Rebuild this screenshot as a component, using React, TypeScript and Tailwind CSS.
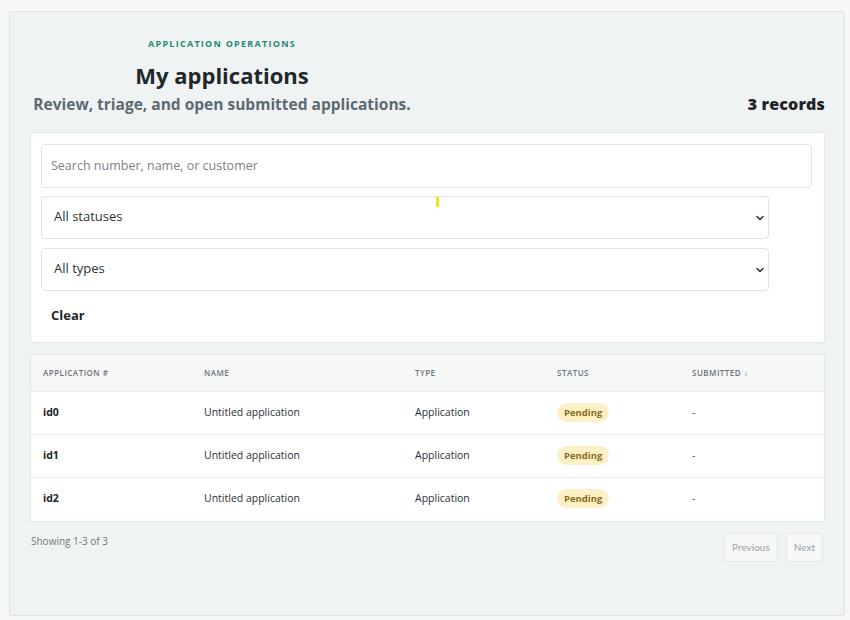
import { ChevronDown } from "lucide-react";

type Row = { id: string; name: string; type: string; status: string; submitted: string };

const rows: Row[] = [
  { id: "id0", name: "Untitled application", type: "Application", status: "Pending", submitted: "-" },
  { id: "id1", name: "Untitled application", type: "Application", status: "Pending", submitted: "-" },
  { id: "id2", name: "Untitled application", type: "Application", status: "Pending", submitted: "-" },
];

function FilterSelect({ label }: { label: string }) {
  return (
    <div className="relative w-[728px]">
      <select className="h-[43px] w-full appearance-none rounded-[4px] border border-[#dfe3e5] bg-white px-3 text-[13px] text-[#2d3338] outline-none">
        <option>{label}</option>
      </select>
      <ChevronDown className="pointer-events-none absolute right-[3px] top-[16px] h-3 w-3 text-[#333]" strokeWidth={3} />
    </div>
  );
}

export default function App() {
  return (
    <div className="min-h-[620px] bg-[#f7f8f8] pt-[11px] pr-[5px] pb-[4px] pl-[9px] font-['Open_Sans','Noto_Sans',sans-serif]">
      <div className="relative h-[605px] rounded-[2px] border border-[#dde2e2] bg-[#f0f3f3] pt-[25px] pr-[19px] pl-5">
        <div className="flex items-end justify-between">
          <div className="flex w-[384px] flex-col items-center">
            <p className="text-[9px] font-bold uppercase tracking-[0.14em] text-[#1d8a6e]">Application operations</p>
            <h1 className="mt-[10px] text-[22px] font-bold leading-[28px] text-[#22272b]">My applications</h1>
            <p className="mt-[4px] text-[15.5px] font-bold leading-[22px] text-[#5c6a71]">Review, triage, and open submitted applications.</p>
          </div>
          <p className="text-[16px] font-extrabold leading-[22px] tracking-[0.01em] text-[#1f2326]">3 records</p>
        </div>

        <section className="mt-[17px] rounded-[2px] border border-[#e4e8e8] bg-white pt-[11px] pr-[12px] pb-[16px] pl-[10px]">
          <input
            placeholder="Search number, name, or customer"
            className="h-[44px] w-full rounded-[4px] border border-[#dfe3e5] bg-white px-[9px] text-[12.5px] text-[#2d3338] outline-none placeholder:text-[#7b8287]"
          />
          <div className="mt-[8px] flex flex-col gap-[9px]">
            <FilterSelect label="All statuses" />
            <FilterSelect label="All types" />
          </div>
          <button type="button" className="mt-[15px] px-[10px] text-[13px] font-bold text-[#23282c]">
            Clear
          </button>
        </section>

        <section className="mt-[11px] overflow-hidden rounded-[2px] border border-[#e1e6e6] bg-white">
          <table className="w-full text-left text-[10.5px] text-[#2b3035]">
            <thead>
              <tr className="h-[37px] bg-[#f6f8f8] text-[8px] uppercase tracking-[0.06em] text-[#6b7378]">
                <th className="w-[173px] pl-[12px] font-semibold">Application #</th>
                <th className="w-[211px] font-semibold">Name</th>
                <th className="w-[142px] font-semibold">Type</th>
                <th className="w-[135px] font-semibold">Status</th>
                <th className="font-semibold">Submitted ↓</th>
              </tr>
            </thead>
            <tbody>
              {rows.map((row) => (
                <tr key={row.id} className="h-[43px] border-t border-[#eceff0]">
                  <td className="pl-[12px] font-bold text-[#1f2326]">{row.id}</td>
                  <td>{row.name}</td>
                  <td>{row.type}</td>
                  <td>
                    <span className="rounded-full bg-[#fdf0c6] px-[7px] py-[3px] text-[9.5px] font-bold text-[#8a6b16]">
                      {row.status}
                    </span>
                  </td>
                  <td className="text-[#555]">{row.submitted}</td>
                </tr>
              ))}
            </tbody>
          </table>
        </section>

        <div className="mt-[11px] flex items-start justify-between pr-[2px]">
          <p className="pl-px pt-px text-[10px] text-[#6f777c]">Showing 1-3 of 3</p>
          <div className="flex gap-2">
            <button type="button" className="h-[29px] rounded-[3px] border border-[#e4e8e8] bg-[#f7f9f9] px-[7px] font-['Lato',sans-serif] text-[10px] text-[#9aa1a5]">
              Previous
            </button>
            <button type="button" className="h-[29px] rounded-[3px] border border-[#e4e8e8] bg-[#f7f9f9] px-[7px] font-['Lato',sans-serif] text-[10px] text-[#9aa1a5]">
              Next
            </button>
          </div>
        </div>

        <div className="absolute left-[426px] top-[185px] h-[10px] w-[3px] bg-[#f5e21c]" />
      </div>
    </div>
  );
}
